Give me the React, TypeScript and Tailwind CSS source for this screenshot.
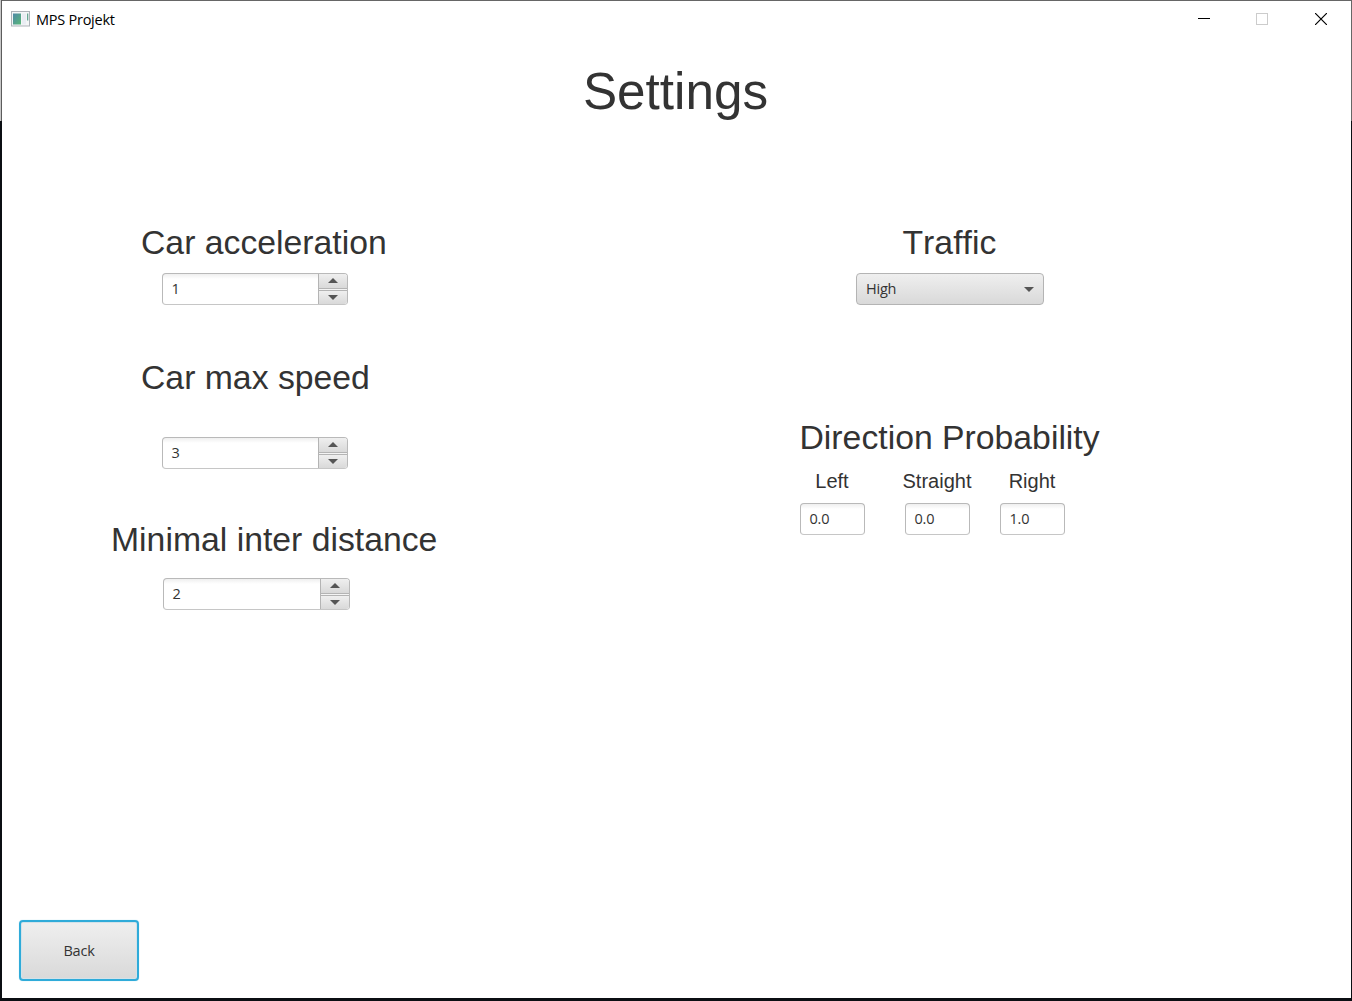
import React from "react";

const uiFont = "font-['Open_Sans',sans-serif] text-[14.5px] tracking-[-0.2px] text-[#333333]";
const fieldFace =
  "border border-[#b9b9b9] border-b-[#c6c6c6] rounded-[4px] bg-[linear-gradient(to_bottom,#efefef_0px,#ffffff_5px)]";
const buttonFace = "bg-linear-to-b from-[#efefef] to-[#d9d9d9]";

function Heading({ children, className = "" }: { children: React.ReactNode; className?: string }) {
  return (
    <h2 className={`h-10 whitespace-nowrap text-[33.75px] leading-10 text-[#333333] ${className}`}>{children}</h2>
  );
}

function Arrow({ up = false }: { up?: boolean }) {
  return (
    <svg width="10" height="5" viewBox="0 0 10 5" className="block">
      <path d={up ? "M0 5 L5 0 L10 5 Z" : "M0 0 L5 5 L10 0 Z"} fill="#555555" />
    </svg>
  );
}

function Spinner({ value, className = "" }: { value: string; className?: string }) {
  return (
    <div className={`flex h-8 overflow-hidden ${fieldFace} ${className}`}>
      <div className={`flex-1 pl-[8.5px] leading-[30px] ${uiFont}`}>{value}</div>
      <div className="flex w-[29px] flex-col border-l border-[#b4b4b4] bg-[#f4f4f4]">
        <div className={`flex h-[15px] items-start justify-center border-b border-[#b4b4b4] pt-1 ${buttonFace}`}>
          <Arrow up />
        </div>
        <div className={`mt-px flex h-[14px] items-center justify-center border-t border-[#b4b4b4] ${buttonFace}`}>
          <Arrow />
        </div>
      </div>
    </div>
  );
}

function Probability({ label, value }: { label: string; value: string }) {
  return (
    <div className="flex w-[65px] flex-col items-center">
      <label className="whitespace-nowrap text-[20px] leading-6 text-[#333333]">{label}</label>
      <div className={`mt-[10px] h-8 w-[65px] pl-[9px] leading-[30px] ${fieldFace} ${uiFont}`}>{value}</div>
    </div>
  );
}

function TitleBar() {
  return (
    <header className="flex h-9 items-center pl-[9px]">
      <svg width="19" height="16" viewBox="0 0 19 16" className="block">
        <defs>
          <linearGradient id="pane" x1="0" y1="0" x2="1" y2="1">
            <stop offset="0" stopColor="#5089a8" />
            <stop offset="1" stopColor="#58b777" />
          </linearGradient>
        </defs>
        <rect x="0.5" y="0.5" width="18" height="14.5" fill="#f4f6f7" stroke="#aeb3b9" />
        <rect x="2" y="2.5" width="8" height="11" fill="url(#pane)" />
        <rect x="11" y="2.5" width="4" height="11" fill="#e9edf3" />
        <rect x="16" y="2.5" width="1.3" height="7" fill="#68a894" />
      </svg>
      <span className="ml-[6px] pt-[2px] font-['Open_Sans',sans-serif] text-[14.5px] leading-5 tracking-[-0.25px] text-black">
        MPS Projekt
      </span>
      <div className="ml-auto flex items-center pr-[24px]">
        <svg width="12" height="12" className="block">
          <path d="M0 5.5H12" stroke="#000" />
        </svg>
        <svg width="12" height="12" className="ml-[46px] block">
          <rect x="0.5" y="0.5" width="11" height="11" fill="none" stroke="#cccccc" />
        </svg>
        <svg width="12" height="12" className="ml-[47px] block">
          <path d="M0 0L12 12M12 0L0 12" stroke="#000" strokeWidth="1.2" />
        </svg>
      </div>
    </header>
  );
}

export default function App() {
  return (
    <div className="flex h-[1001px] w-[1352px] bg-[#0b0e13] font-['Liberation_Sans',sans-serif] [font-kerning:none]">
      <div className="flex w-[2px] shrink-0 flex-col">
        <div className="h-[121px] border-r border-[#5c5c5c] bg-[#c8c8c8]" />
      </div>
      <div className="flex h-[998px] w-[1349px] flex-col border-t border-[#666666] bg-white">
        <TitleBar />
        <h1 className="mt-[25px] h-[60px] w-[1347px] text-center text-[51.25px] leading-[60px] text-[#333333]">
          Settings
        </h1>
        <main className="mt-[100px] flex flex-1">
          <section className="w-[690px]">
            <Heading className="ml-[139px]">Car acceleration</Heading>
            <Spinner value="1" className="mt-[11px] ml-[160px] w-[186px]" />
            <Heading className="mt-[52px] ml-[139px]">Car max speed</Heading>
            <Spinner value="3" className="mt-[39.5px] ml-[160px] w-[186px]" />
            <Heading className="mt-[50.5px] ml-[109px]">Minimal inter distance</Heading>
            <Spinner value="2" className="mt-[19px] ml-[161px] w-[187px]" />
          </section>
          <section>
            <Heading className="ml-[210.5px]">Traffic</Heading>
            <div
              className={`mt-[11px] ml-[164px] flex h-8 w-[188px] items-center justify-between rounded-[4px] border border-[#b4b4b4] pr-[9px] pl-[9px] ${buttonFace}`}
            >
              <span className={`leading-[30px] ${uiFont}`}>High</span>
              <Arrow />
            </div>
            <Heading className="mt-[112px] ml-[107.5px]">Direction Probability</Heading>
            <div className="mt-3 ml-[107.5px] flex">
              <Probability label="Left" value="0.0" />
              <div className="w-10" />
              <Probability label="Straight" value="0.0" />
              <div className="w-[30px]" />
              <Probability label="Right" value="1.0" />
            </div>
          </section>
        </main>
        <button
          className={`mb-[17px] ml-[17px] h-[61px] w-[120px] rounded-[4px] border-2 border-[#2fabd9] shadow-[inset_0_0_0_1px_#d3e2e9,0_0_1px_#8ed4ec] ${buttonFace} ${uiFont}`}
        >
          Back
        </button>
      </div>
      <div className="h-[121px] w-px bg-[#666666]" />
    </div>
  );
}
